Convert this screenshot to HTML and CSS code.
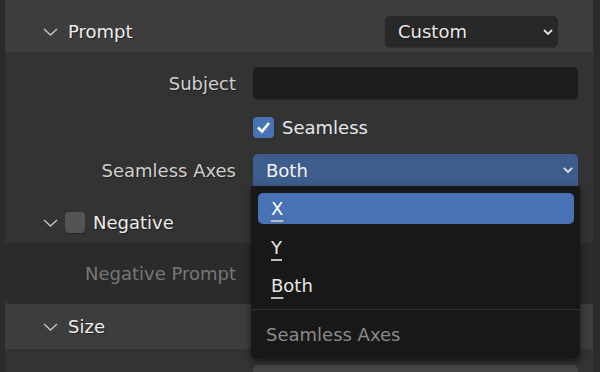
FILE: index.html
```html
<!DOCTYPE html>
<html>
<head>
<meta charset="utf-8">
<link rel="stylesheet" href="styles.css">
</head>
<body>
<div class="region">
  <div class="panel">
    <div class="phead prompt-head">
      <svg class="chev" width="15" height="8" viewBox="0 0 15 8"><polyline points="1,1 7.5,7 14,1" /></svg>
      <span class="ptitle">Prompt</span>
      <div class="dd custom"><span>Custom</span><svg class="ddchev" width="10" height="6" viewBox="0 0 10 6"><polyline points="1,1 5,5 9,1" /></svg></div>
    </div>
    <div class="pbody prompt-body">
      <div class="row"><span class="lbl">Subject</span><div class="field text"></div></div>
      <div class="row row-check"><span class="lbl"></span>
        <div class="check"><span class="cb on"><svg width="21" height="21" viewBox="0 0 21 21"><polyline points="5,10.5 9,14.5 16,6" /></svg></span><span>Seamless</span></div>
      </div>
      <div class="row row-menu"><span class="lbl">Seamless Axes</span>
        <div class="field menu"><span>Both</span><svg class="ddchev" width="10" height="6" viewBox="0 0 10 6"><polyline points="1,1 5,5 9,1" /></svg></div>
      </div>
      <div class="subhead">
        <svg class="chev" width="15" height="8" viewBox="0 0 15 8"><polyline points="1,1 7.5,7 14,1" /></svg>
        <span class="cb off"></span>
        <span class="ptitle">Negative</span>
      </div>
      <div class="subbody">
        <div class="row"><span class="lbl dim">Negative Prompt</span><div class="field text"></div></div>
      </div>
    </div>
  </div>
  <div class="panel">
    <div class="phead size-head">
      <svg class="chev" width="15" height="8" viewBox="0 0 15 8"><polyline points="1,1 7.5,7 14,1" /></svg>
      <span class="ptitle">Size</span>
    </div>
    <div class="pbody size-body">
      <div class="row"><span class="lbl">Width</span><div class="field num"></div></div>
    </div>
  </div>

  <div class="popup">
    <div class="item active"><span><u>X</u></span></div>
    <div class="item"><span><u>Y</u></span></div>
    <div class="item"><span><u>B</u>oth</span></div>
    <div class="sep"></div>
    <div class="ptitle2">Seamless Axes</div>
  </div>
</div>
</body>
</html>
```

FILE: styles.css
```css
* { box-sizing: border-box; }
html, body {
  margin: 0;
  padding: 0;
  width: 600px;
  height: 372px;
  overflow: hidden;
  background: #2a2a2a;
}
body {
  font-family: "DejaVu Sans", sans-serif;
  font-size: 18px;
  color: #e6e6e6;
}
.region {
  position: relative;
  width: 600px;
  height: 372px;
  padding: 0 7px 0 5px;
  overflow: hidden;
  background: #2b2b2b;
}
.panel {
  display: flex;
  flex-direction: column;
}
.phead {
  display: flex;
  align-items: center;
  background: #3d3d3d;
  padding-left: 38px;
  text-shadow: 1px 1px 1px rgba(0,0,0,0.45);
}
.prompt-head {
  height: 52px;
  padding-top: 16px;
  padding-bottom: 5px;
}
.size-head {
  height: 45px;
}
.chev {
  flex: none;
  fill: none;
  stroke: #c4c4c4;
  stroke-width: 1.4;
}
.ptitle {
  margin-left: 10px;
  color: #ececec;
}
.dd {
  display: flex;
  align-items: center;
  justify-content: space-between;
  height: 31px;
  border-radius: 5px;
}
.custom {
  margin-left: auto;
  margin-right: 35px;
  width: 173px;
  background: #282828;
  padding: 0 5px 0 13px;
  box-shadow: 0 1px 1px rgba(0,0,0,0.25);
}
.ddchev {
  fill: none;
  stroke: #e2e2e2;
  stroke-width: 1.8;
}
.pbody {
  background: #333333;
}
.prompt-body {
  padding-top: 15px;
}
.row {
  display: flex;
  align-items: center;
  height: 32px;
}
.row-check { margin-top: 12px; }
.row-menu { margin-top: 11px; }
.lbl {
  flex: none;
  width: 231px;
  text-align: right;
  color: #cfcfcf;
  margin-right: 17px;
  text-shadow: 1px 1px 1px rgba(0,0,0,0.4);
  white-space: nowrap;
}
.lbl.dim {
  color: #777777;
  text-shadow: none;
}
.field {
  width: 325px;
  height: 32px;
  border-radius: 5px;
}
.field.text {
  background: #1d1d1d;
  box-shadow: 0 1px 1px rgba(0,0,0,0.25);
}
.field.menu {
  display: flex;
  align-items: center;
  justify-content: space-between;
  background: #3d5d8c;
  border-radius: 5px 5px 0 0;
  padding: 0 5px 0 13px;
  color: #f2f2f2;
}
.field.num {
  background: #474747;
}
.check {
  display: flex;
  align-items: center;
  color: #e6e6e6;
}
.cb {
  flex: none;
  display: block;
  width: 21px;
  height: 21px;
  border-radius: 4px;
}
.cb.on {
  background: #4772b3;
  margin-right: 8px;
}
.cb.on svg {
  display: block;
  fill: none;
  stroke: #ffffff;
  stroke-width: 2.6;
}
.cb.off {
  width: 20px;
  background: #545454;
  margin-left: 7px;
  box-shadow: 0 1px 1px rgba(0,0,0,0.3);
}
.subhead {
  display: flex;
  align-items: center;
  height: 57px;
  padding-top: 20px;
  padding-bottom: 4px;
  padding-left: 38px;
  text-shadow: 1px 1px 1px rgba(0,0,0,0.45);
}
.subhead .ptitle {
  margin-left: 8px;
}
.subbody {
  background: #2b2b2b;
  height: 61px;
  padding-top: 14px;
  border-radius: 0 0 6px 6px;
}
.size-body {
  height: 40px;
  padding-top: 16px;
}

.popup {
  position: absolute;
  left: 251px;
  top: 186px;
  width: 329px;
  height: 173px;
  background: #181818;
  border-radius: 0 0 7px 7px;
  box-shadow: 0 3px 7px rgba(0,0,0,0.55);
  padding: 4px 6px 0 7px;
  display: flex;
  flex-direction: column;
}
.item {
  height: 38px;
  display: flex;
  align-items: center;
  padding: 0 13px;
  color: #e6e6e6;
  flex: none;
}
.item u {
  text-decoration: underline;
  text-decoration-thickness: 1.5px;
  text-underline-offset: 5px;
  text-decoration-color: #bdbdbd;
}
.item.active {
  background: #4772b3;
  border-radius: 5px;
  height: 31px;
  margin: 3px 0 4px;
  color: #ffffff;
}
.sep {
  flex: none;
  height: 12px;
  margin: 0 -6px 0 -7px;
  border-bottom: 1px solid #2f2f2f;
  transform: translateY(-6px);
  margin-bottom: -1px;
}
.ptitle2 {
  height: 37px;
  display: flex;
  align-items: center;
  padding-left: 8px;
  color: #8a8a8a;
  flex: none;
  margin-top: 1px;
}
```
